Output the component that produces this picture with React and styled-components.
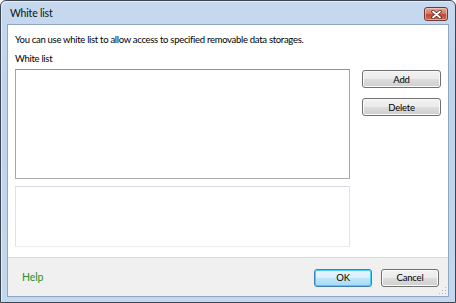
import React from "react";
import styled, { createGlobalStyle } from "styled-components";

const GlobalStyle = createGlobalStyle`
  html, body {
    margin: 0;
    padding: 0;
    background: #ffffff;
  }
  body {
    font-family: Lato, "Liberation Sans", Arial, sans-serif;
    font-size: 9.5px;
    letter-spacing: -0.3px;
    color: #000000;
  }
`;

const Window = styled.div`
  width: 456px;
  height: 303px;
  box-sizing: border-box;
  border: 1px solid #3d4650;
  border-radius: 6px 6px 0 0;
  background: linear-gradient(180deg, #c6d9ef 0%, #bed3ec 30%, #c3d7ee 100%);
  box-shadow: inset 1px 1px 0 #e3edf8;
  padding: 0 6px 5px 6px;
  display: flex;
  flex-direction: column;
`;

const TitleBar = styled.div`
  height: 23px;
  display: flex;
  align-items: flex-start;
  padding-left: 3px;
`;

const Caption = styled.div`
  margin-top: 6px;
  font-size: 10.5px;
  letter-spacing: -0.2px;
  color: #111111;
`;

const CloseButton = styled.div`
  margin-left: auto;
  margin-top: 6px;
  margin-right: 1px;
  width: 24px;
  height: 14px;
  box-sizing: border-box;
  border: 1px solid #6d3a34;
  border-radius: 3px;
  background: linear-gradient(180deg, #e6a796 0%, #d57a66 45%, #c04a31 55%, #cf6a4e 100%);
  box-shadow: inset 0 0 0 1px rgba(255, 220, 210, 0.55);
  display: flex;
  align-items: center;
  justify-content: center;
`;

const Client = styled.div`
  flex: 1;
  display: flex;
  flex-direction: column;
  border: 1px solid #8fa7c3;
  background: #ffffff;
`;

const Main = styled.div`
  flex: 1;
  padding: 8px 7px 0 7px;
  display: flex;
  flex-direction: column;
`;

const Text = styled.div`
  line-height: 13px;
  height: 13px;
  margin-bottom: ${({ gap }) => gap}px;
  white-space: nowrap;
`;

const Body = styled.div`
  display: flex;
  gap: 12px;
`;

const Lists = styled.div`
  width: 335px;
  display: flex;
  flex-direction: column;
  gap: 7px;
`;

const ListBox = styled.div`
  height: ${({ h }) => h}px;
  box-sizing: border-box;
  background: #ffffff;
  border: 1px solid ${({ light }) => (light ? "#e2e3e6" : "#a5a7ab")};
  border-top-color: ${({ light }) => (light ? "#d9dadd" : "#8f9297")};
  border-bottom-color: ${({ light }) => (light ? "#ebecee" : "#a9abaf")};
`;

const Side = styled.div`
  display: flex;
  flex-direction: column;
  gap: 10px;
  padding-top: 1px;
`;

const Button = styled.button`
  width: ${({ w }) => w}px;
  height: 18px;
  box-sizing: border-box;
  padding: 0;
  font-family: Lato, "Liberation Sans", Arial, sans-serif;
  font-size: 9.5px;
  letter-spacing: -0.2px;
  color: #000000;
  border: 1px solid ${({ primary }) => (primary ? "#3c7fb1" : "#707070")};
  border-radius: 3px;
  background: ${({ primary }) =>
    primary
      ? "linear-gradient(180deg, #eaf6fd 0%, #d9f0fc 50%, #bee6fd 51%, #a7d9f5 100%)"
      : "linear-gradient(180deg, #f2f2f2 0%, #ebebeb 50%, #dddddd 51%, #cfcfcf 100%)"};
  box-shadow: inset 0 0 0 1px ${({ primary }) => (primary ? "#48d0f9" : "#fbfbfb")};
  line-height: 15px;
`;

const Footer = styled.div`
  height: 38px;
  border-top: 1px solid #dcdcdc;
  background: #f0f0f0;
  display: flex;
  align-items: center;
  padding: 0 9px 0 14px;
  position: relative;
`;

const HelpLink = styled.span`
  color: #2a8f2a;
  font-size: 10.5px;
  letter-spacing: -0.1px;
`;

const FooterButtons = styled.div`
  margin-left: auto;
  display: flex;
  gap: 9px;
  margin-top: 1px;
`;

const Grip = styled.svg`
  position: absolute;
  right: 1px;
  bottom: 1px;
`;

export default function App() {
  return (
    <>
      <GlobalStyle />
      <Window>
        <TitleBar>
          <Caption>White list</Caption>
          <CloseButton>
            <svg width="11" height="9" viewBox="0 0 11 9">
              <path d="M2 1.5 L9 7.5 M9 1.5 L2 7.5" stroke="#4a2a26" strokeWidth="3.4" strokeLinecap="round" />
              <path d="M2 1.5 L9 7.5 M9 1.5 L2 7.5" stroke="#ffffff" strokeWidth="1.8" strokeLinecap="round" />
            </svg>
          </CloseButton>
        </TitleBar>
        <Client>
          <Main>
            <Text gap={6}>You can use white list to allow access to specified removable data storages.</Text>
            <Text gap={4}>White list</Text>
            <Body>
              <Lists>
                <ListBox h={110} />
                <ListBox h={61} light />
              </Lists>
              <Side>
                <Button w={79}>Add</Button>
                <Button w={79}>Delete</Button>
              </Side>
            </Body>
          </Main>
          <Footer>
            <HelpLink>Help</HelpLink>
            <FooterButtons>
              <Button w={58} primary>OK</Button>
              <Button w={58}>Cancel</Button>
            </FooterButtons>
            <Grip width="8" height="8" viewBox="0 0 8 8">
              <rect x="6" y="0" width="1" height="1" fill="#b8b8b8" />
              <rect x="3" y="3" width="1" height="1" fill="#b8b8b8" />
              <rect x="6" y="3" width="1" height="1" fill="#b8b8b8" />
              <rect x="0" y="6" width="1" height="1" fill="#b8b8b8" />
              <rect x="3" y="6" width="1" height="1" fill="#b8b8b8" />
              <rect x="6" y="6" width="1" height="1" fill="#b8b8b8" />
            </Grip>
          </Footer>
        </Client>
      </Window>
    </>
  );
}
